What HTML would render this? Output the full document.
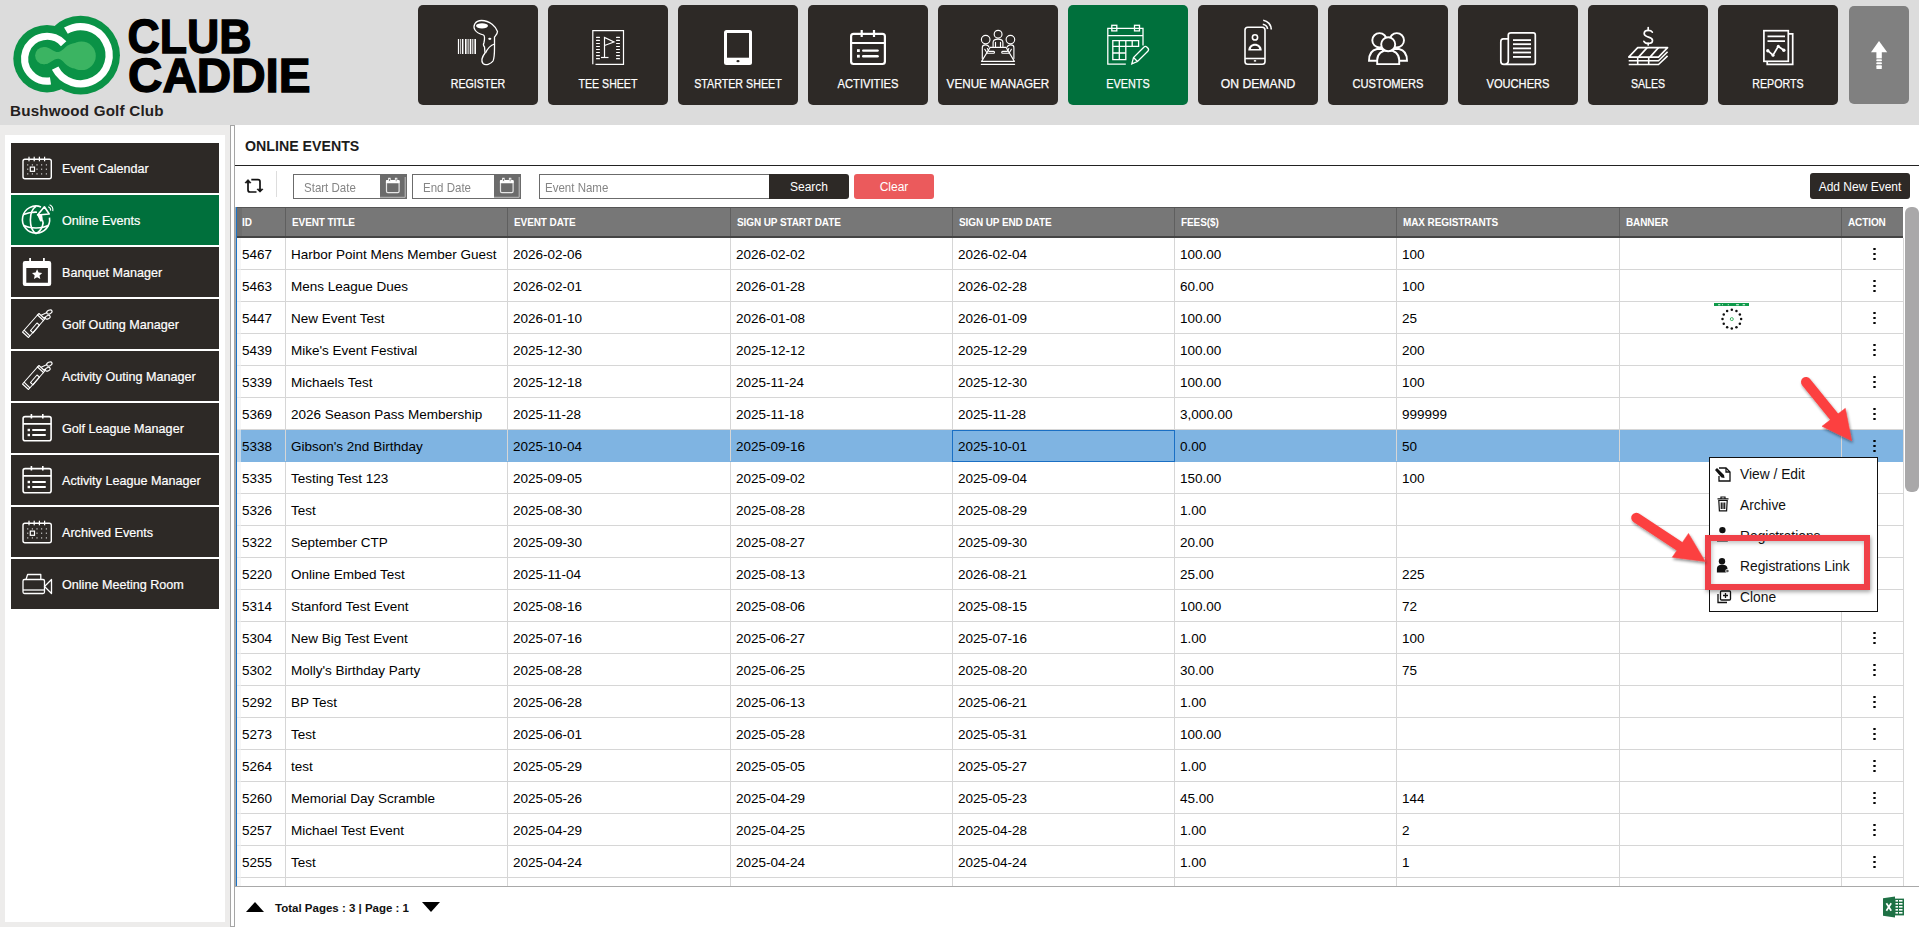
<!DOCTYPE html><html><head><meta charset="utf-8"><style>
*{box-sizing:border-box;margin:0;padding:0}
html,body{width:1919px;height:927px;overflow:hidden;background:#fff;font-family:"Liberation Sans",sans-serif;}
.abs{position:absolute}
.nav{position:absolute;top:5px;width:120px;height:100px;background:#2d2926;border-radius:5px;}
.nav span{position:absolute;left:0;right:0;top:75px;text-align:center;color:#fff;font-size:12px;letter-spacing:-0.3px;line-height:16px}
.si{position:absolute;left:11px;width:208px;height:50px;background:#2d2926;color:#fff;font-size:12.6px;line-height:52px;padding-left:51px;white-space:nowrap;-webkit-text-stroke:0.2px #fff}
.hd{position:absolute;top:207px;height:31px;background:#777;border-top:1px solid #555;border-bottom:2px solid #444;}
.th{position:absolute;top:0;height:28px;line-height:30px;color:#fff;font-weight:bold;font-size:10px;padding-left:6px;border-left:1px solid #5f5f5f;white-space:nowrap;letter-spacing:-0.1px}
.tr{position:absolute;left:237px;width:1666px;height:32px;border-bottom:1px solid #d6d6d6}
.td{position:absolute;top:0;height:31px;padding-top:2px;line-height:29px;font-size:13.5px;color:#000;padding-left:5px;border-left:1px solid #d6d6d6;white-space:nowrap}
.dots{position:absolute;left:1872.5px;width:3px}
.dots i{position:absolute;left:0;width:3px;height:2.2px;border-radius:50%;background:#000}
.mi{position:absolute;left:1740px;font-size:13.8px;color:#111;line-height:16px;white-space:nowrap}
</style></head><body><div class="abs" style="left:0;top:0;width:1919px;height:125px;background:#dcdcdc"></div><svg style="position:absolute;left:0;top:0" width="330" height="125" viewBox="0 0 330 125"><g fill="#0a9246"><circle cx="47" cy="58.7" r="33.7"/><circle cx="80.6" cy="55.2" r="39.35"/></g><g fill="none" stroke="#fff" stroke-width="7.3"><path d="M63.65,43.71 A22.4,22.4 0 1 0 50.5,80.82"/><path d="M65.9,30.73 A28.55,28.55 0 1 1 55.16,68.16"/></g><g fill="#3bb462"><circle cx="43.8" cy="55.6" r="8.7"/><circle cx="81.5" cy="55.8" r="14.3"/><path d="M43.8,46.9 C50,46.9 53,52 58.4,52 C63,52 66,43 76,43 L76,68.6 C66,68.6 63,58.8 58.4,58.8 C53,58.8 50,64.3 43.8,64.3 Z"/></g><text x="127.5" y="52.7" font-family="Liberation Sans" font-weight="bold" font-size="48" textLength="124" lengthAdjust="spacingAndGlyphs" fill="#000" stroke="#000" stroke-width="1.4">CLUB</text><text x="128" y="92.4" font-family="Liberation Sans" font-weight="bold" font-size="48" textLength="182.5" lengthAdjust="spacingAndGlyphs" fill="#000" stroke="#000" stroke-width="1.4">CADDIE</text></svg><div class="abs" style="left:10px;top:102px;font-size:15.2px;font-weight:bold;color:#24201d;line-height:18px;white-space:nowrap;letter-spacing:0.2px">Bushwood Golf Club</div><div class="nav" style="left:418px;background:#2d2926"></div><div class="nav" style="left:548px;background:#2d2926"></div><div class="nav" style="left:678px;background:#2d2926"></div><div class="nav" style="left:808px;background:#2d2926"></div><div class="nav" style="left:938px;background:#2d2926"></div><div class="nav" style="left:1068px;background:#00703c"></div><div class="nav" style="left:1198px;background:#2d2926"></div><div class="nav" style="left:1328px;background:#2d2926"></div><div class="nav" style="left:1458px;background:#2d2926"></div><div class="nav" style="left:1588px;background:#2d2926"></div><div class="nav" style="left:1718px;background:#2d2926"></div><div class="abs" style="left:1849px;top:6px;width:60px;height:98px;background:#808080;border-radius:5px"></div><svg class="abs" style="left:0;top:0;font-family:Liberation Sans" width="1919" height="125" viewBox="0 0 1919 125"><g fill="none" stroke="#fff" stroke-width="1.3"><path d="M481.5,20.5 C475,20.5 472.5,26 475,30 C476.5,32.5 480,34 483.5,35 C485,36 484.5,40 484,42.5 C483,44.5 483.5,46 484.5,47 L485,53 C482,57 481,61 483,63.5 C485.5,66 491,64 493,61 C494.5,58 494.5,52 494.5,48 L494.5,37 C495.5,35.5 497.5,34 497.5,31.5 C496,27 490,20.5 481.5,20.5 Z"/><path d="M485.5,53 C488,47.5 491.5,45 494.5,44"/></g><ellipse cx="482" cy="25.8" rx="6" ry="2.6" fill="#fff"/><ellipse cx="489.8" cy="38.8" rx="1.6" ry="1.1" fill="#fff"/><rect x="457.9" y="39" width="1.2" height="15" fill="#fff"/><rect x="460.2" y="39" width="0.7" height="15" fill="#fff"/><rect x="461.9" y="39" width="1.5" height="15" fill="#fff"/><rect x="465" y="39" width="1.6" height="15" fill="#fff"/><rect x="467.6" y="39" width="1.0" height="15" fill="#fff"/><rect x="469.7" y="39" width="1.6" height="15" fill="#fff"/><rect x="472.3" y="39" width="1.0" height="15" fill="#fff"/><rect x="474.4" y="39" width="1.6" height="15" fill="#fff"/><g fill="none" stroke="#fff" stroke-width="1.2"><path d="M595.5,64.3 H623.5 V30.7 H592.8 V64.3"/><path d="M604.5,57 V37.5 L614,42 L604.5,45.5"/><path d="M601,57.5 H608.5"/></g><rect x="596" y="36.8" width="4" height="1.1" rx="0.5" fill="#fff"/><rect x="616" y="36.8" width="4" height="1.1" rx="0.5" fill="#fff"/><rect x="596" y="39.8" width="4" height="1.1" rx="0.5" fill="#fff"/><rect x="616" y="39.8" width="4" height="1.1" rx="0.5" fill="#fff"/><rect x="596" y="42.9" width="4" height="1.1" rx="0.5" fill="#fff"/><rect x="616" y="42.9" width="4" height="1.1" rx="0.5" fill="#fff"/><rect x="596" y="45.9" width="4" height="1.1" rx="0.5" fill="#fff"/><rect x="616" y="45.9" width="4" height="1.1" rx="0.5" fill="#fff"/><rect x="596" y="49.0" width="4" height="1.1" rx="0.5" fill="#fff"/><rect x="616" y="49.0" width="4" height="1.1" rx="0.5" fill="#fff"/><rect x="596" y="52.0" width="4" height="1.1" rx="0.5" fill="#fff"/><rect x="616" y="52.0" width="4" height="1.1" rx="0.5" fill="#fff"/><rect x="596" y="55.1" width="4" height="1.1" rx="0.5" fill="#fff"/><rect x="616" y="55.1" width="4" height="1.1" rx="0.5" fill="#fff"/><rect x="596" y="58.1" width="4" height="1.1" rx="0.5" fill="#fff"/><rect x="616" y="58.1" width="4" height="1.1" rx="0.5" fill="#fff"/><rect x="724" y="30" width="28" height="35" rx="2.5" fill="#fff"/><rect x="727" y="33" width="22" height="24.7" fill="#2d2926"/><ellipse cx="738" cy="61.2" rx="1.6" ry="1.1" fill="#2d2926"/><g fill="none" stroke="#fff" stroke-width="2.2"><rect x="851.1" y="33.8" width="33.8" height="30.2" rx="2.5"/><path d="M851,43 H885"/><path d="M861.7,30 V37 M874,30 V37"/></g><g fill="#fff"><rect x="857" y="49.2" width="2.8" height="2.8"/><rect x="857" y="54.8" width="2.8" height="2.8"/><rect x="862" y="49.4" width="16.8" height="2.4" rx="1.2"/><rect x="862" y="55" width="16.8" height="2.4" rx="1.2"/></g><g fill="none" stroke="#fff" stroke-width="1.15" stroke-linejoin="round" stroke-linecap="round"><circle cx="998.1" cy="34.2" r="3.9"/><circle cx="985.7" cy="39.6" r="4.3"/><circle cx="1010.4" cy="39.6" r="4.3"/><path d="M993.1,46.6 V42.5 C993.1,40.2 995,39.1 998,39.1 C1001,39.1 1002.9,40.2 1002.9,42.5 V46.6"/><path d="M995.5,42.2 V46.6 M1000.5,42.2 V46.6"/><path d="M990.2,47.3 H1006 L1014.4,61.4 H981.6 Z"/><path d="M981.3,64.3 H1014.6"/><path d="M982.3,58.5 V47.5 C982.3,45.5 983.5,44.8 985.5,44.8 C987.5,44.8 988.5,45.5 989,47"/><path d="M984.8,49.3 L987.2,53.2 H993.6 C994.8,53.2 994.8,51.3 993.6,51.3 H988.8 L987.4,48.5"/><path d="M1013.9,58.5 V47.5 C1013.9,45.5 1012.7,44.8 1010.7,44.8 C1008.7,44.8 1007.7,45.5 1007.2,47"/><path d="M1011.4,49.3 L1009,53.2 H1002.6 C1001.4,53.2 1001.4,51.3 1002.6,51.3 H1007.4 L1008.8,48.5"/></g><g fill="none" stroke="#fff" stroke-width="1.3"><path d="M1125.8,64.2 H1107.8 V28.3 H1143 V45.5"/><path d="M1107.8,35.7 H1143"/><rect x="1111.8" y="25.3" width="5" height="5.6"/><rect x="1134.5" y="25.3" width="5" height="5.6"/><path d="M1112.8,40.6 H1138.6 V46.3 H1125.8 V59.7 H1112.8 Z"/><path d="M1119.3,40.6 V59.7 M1125.8,40.6 V46.3 M1132.2,40.6 V46.3 M1112.8,46.3 H1125.8 M1112.8,53 H1125.8"/><path d="M1131.8,63.8 L1133.5,57.5 L1143.8,47.2 C1144.8,46.2 1146,46.2 1147,47.2 L1147.8,48 C1148.8,49 1148.8,50.2 1147.8,51.2 L1137.5,61.5 Z M1133.5,57.5 L1137.5,61.5"/></g><g fill="none" stroke="#fff" stroke-width="1.6"><rect x="1245" y="27.3" width="20" height="37" rx="2.8"/><path d="M1245,58.5 H1265"/><circle cx="1255" cy="37.4" r="2.6"/><path d="M1263.2,20.2 A9.5,9.5 0 0 1 1271.3,29.6"/><path d="M1262.8,24.2 A5.8,5.8 0 0 1 1267.6,29"/></g><path d="M1248.3,50.6 C1248.3,41.5 1261.7,41.5 1261.7,50.6 Z" fill="#fff"/><path d="M1250.8,49 C1251.5,44.8 1258.5,44.8 1259.2,49 Z" fill="#2d2926"/><ellipse cx="1255" cy="60.9" rx="1.3" ry="0.8" fill="#fff"/><g fill="#2d2926" stroke="#fff" stroke-width="1.9"><path d="M1369,60.8 C1369,54 1372,50 1377,49 L1383,49 L1383,60.8 Z"/><path d="M1407,60.8 C1407,54 1404,50 1399,49 L1393,49 L1393,60.8 Z"/><circle cx="1379.5" cy="40.3" r="7.2"/><circle cx="1396.8" cy="40.3" r="7.2"/><path d="M1377.2,64.1 V60 C1377.2,54 1382,50 1388.2,50 C1394.4,50 1399.2,54 1399.2,60 V64.1 Z"/><circle cx="1388.2" cy="44.3" r="7"/></g><g fill="none" stroke="#fff" stroke-width="1.7"><path d="M1508.3,38.8 H1503.2 C1501.5,38.8 1500.8,40 1500.8,41.8 V61.2 C1500.8,63.3 1502,64.3 1504,64.3 C1506,64.3 1508.3,63.3 1508.3,61 V35 C1508.3,33.5 1509.3,32.8 1511,32.8 H1533.3 C1534.8,32.8 1535.3,33.5 1535.3,35 V62.5 C1535.3,63.8 1534.8,64.3 1533.3,64.3 H1504"/></g><rect x="1513" y="39.2" width="18" height="1.8" fill="#fff"/><rect x="1513" y="43.3" width="18" height="1.8" fill="#fff"/><rect x="1513" y="47.5" width="18" height="1.8" fill="#fff"/><rect x="1513" y="51.6" width="18" height="1.8" fill="#fff"/><rect x="1513" y="56.0" width="18" height="1.8" fill="#fff"/><g fill="none" stroke="#fff" stroke-width="1.7" stroke-linecap="round"><path d="M1652.3,32.2 C1651.5,30.8 1650,30.3 1648.2,30.3 C1645.5,30.3 1644.2,31.8 1644.2,33.6 C1644.2,38.2 1652.5,36.2 1652.5,40.4 C1652.5,42.3 1650.8,43.4 1648.2,43.4 C1646.2,43.4 1644.6,42.7 1643.9,41.3"/><path d="M1648.2,27.5 V30.3 M1648.2,43.4 V44.9"/></g><g fill="none" stroke="#fff" stroke-width="1.6" stroke-linejoin="round"><path d="M1628.7,57.1 L1637.7,47.6 H1667.6 L1658.5,57.1 Z"/><path d="M1638.5,57.1 L1647.2,47.6 M1650,57.1 L1658.5,47.6"/><path d="M1628.7,60.8 H1658.5 L1667.6,51.7 M1628.7,64.5 H1658.5 L1667.6,55.8"/><path d="M1637.7,57.1 V64.5 M1648.7,57.1 V64.5"/></g><g fill="none" stroke="#fff" stroke-width="1.7"><path d="M1789,33.8 H1792.7 V64.4 H1767.2 V61.3"/><rect x="1763.9" y="30.7" width="24.4" height="30.6"/><path d="M1767.5,36.3 H1785 M1767.5,41.2 H1785"/><path d="M1767.8,50.7 L1773,55.2 L1778.3,46.3 L1783.8,50.2"/></g><g fill="#fff"><circle cx="1767.8" cy="50.7" r="1.7"/><circle cx="1773" cy="55.2" r="1.5"/><circle cx="1778.3" cy="46.3" r="1.5"/><circle cx="1783.8" cy="50.2" r="1.7"/></g><g fill="#fff"><path d="M1879,41 L1887.2,52.3 H1871 Z"/><rect x="1876.4" y="52" width="5.4" height="6.4"/><rect x="1876.2" y="59.2" width="5.8" height="2" rx="1"/><rect x="1876.2" y="62.2" width="5.8" height="2" rx="1"/><rect x="1876.2" y="65.2" width="5.8" height="2" rx="1"/><rect x="1876.2" y="67" width="5.8" height="2" rx="1"/></g><text x="450.8" y="88" font-size="13.4" textLength="54.4" lengthAdjust="spacingAndGlyphs" fill="#fff" stroke="#fff" stroke-width="0.25">REGISTER</text><text x="578.6" y="88" font-size="13.4" textLength="58.8" lengthAdjust="spacingAndGlyphs" fill="#fff" stroke="#fff" stroke-width="0.25">TEE SHEET</text><text x="694.2" y="88" font-size="13.4" textLength="87.5" lengthAdjust="spacingAndGlyphs" fill="#fff" stroke="#fff" stroke-width="0.25">STARTER SHEET</text><text x="837.6" y="88" font-size="13.4" textLength="60.8" lengthAdjust="spacingAndGlyphs" fill="#fff" stroke="#fff" stroke-width="0.25">ACTIVITIES</text><text x="946.6" y="88" font-size="13.4" textLength="102.7" lengthAdjust="spacingAndGlyphs" fill="#fff" stroke="#fff" stroke-width="0.25">VENUE MANAGER</text><text x="1106.3" y="88" font-size="13.4" textLength="43.4" lengthAdjust="spacingAndGlyphs" fill="#fff" stroke="#fff" stroke-width="0.25">EVENTS</text><text x="1220.7" y="88" font-size="13.4" textLength="74.6" lengthAdjust="spacingAndGlyphs" fill="#fff" stroke="#fff" stroke-width="0.25">ON DEMAND</text><text x="1352.5" y="88" font-size="13.4" textLength="71" lengthAdjust="spacingAndGlyphs" fill="#fff" stroke="#fff" stroke-width="0.25">CUSTOMERS</text><text x="1486.5" y="88" font-size="13.4" textLength="63" lengthAdjust="spacingAndGlyphs" fill="#fff" stroke="#fff" stroke-width="0.25">VOUCHERS</text><text x="1630.9" y="88" font-size="13.4" textLength="34.2" lengthAdjust="spacingAndGlyphs" fill="#fff" stroke="#fff" stroke-width="0.25">SALES</text><text x="1752.3" y="88" font-size="13.4" textLength="51.3" lengthAdjust="spacingAndGlyphs" fill="#fff" stroke="#fff" stroke-width="0.25">REPORTS</text></svg><div class="abs" style="left:0;top:125px;width:230px;height:802px;background:#edeceb"></div><div class="abs" style="left:5px;top:135px;width:220px;height:787px;background:#fff"></div><div class="si" style="top:143px;background:#2d2926">Event Calendar</div><div class="si" style="top:195px;background:#00703c">Online Events</div><div class="si" style="top:247px;background:#2d2926">Banquet Manager</div><div class="si" style="top:299px;background:#2d2926">Golf Outing Manager</div><div class="si" style="top:351px;background:#2d2926">Activity Outing Manager</div><div class="si" style="top:403px;background:#2d2926">Golf League Manager</div><div class="si" style="top:455px;background:#2d2926">Activity League Manager</div><div class="si" style="top:507px;background:#2d2926">Archived Events</div><div class="si" style="top:559px;background:#2d2926">Online Meeting Room</div><svg class="abs" style="left:0;top:0" width="235" height="927" viewBox="0 0 235 927"><g fill="none" stroke="#fff" stroke-width="1.4"><rect x="23" y="159.2" width="28.3" height="19.6" rx="2"/></g><rect x="28.4" y="156.7" width="1.2" height="4.6" fill="#fff"/><rect x="33.6" y="156.7" width="1.2" height="4.6" fill="#fff"/><rect x="38.8" y="156.7" width="1.2" height="4.6" fill="#fff"/><rect x="44.0" y="156.7" width="1.2" height="4.6" fill="#fff"/><rect x="27.099999999999998" y="164.3" width="1.2" height="1.2" fill="#ccc"/><rect x="31.799999999999997" y="164.3" width="1.2" height="1.2" fill="#ccc"/><rect x="36.4" y="164.3" width="1.2" height="1.2" fill="#ccc"/><rect x="41.0" y="164.3" width="1.2" height="1.2" fill="#ccc"/><rect x="45.8" y="164.3" width="1.2" height="1.2" fill="#ccc"/><rect x="27.099999999999998" y="168.6" width="1.2" height="1.2" fill="#ccc"/><rect x="36.4" y="168.6" width="1.2" height="1.2" fill="#ccc"/><rect x="41.0" y="168.6" width="1.2" height="1.2" fill="#ccc"/><rect x="45.8" y="168.6" width="1.2" height="1.2" fill="#ccc"/><rect x="27.099999999999998" y="173.3" width="1.2" height="1.2" fill="#ccc"/><rect x="31.799999999999997" y="173.3" width="1.2" height="1.2" fill="#ccc"/><rect x="36.4" y="173.3" width="1.2" height="1.2" fill="#ccc"/><rect x="41.0" y="173.3" width="1.2" height="1.2" fill="#ccc"/><rect x="45.8" y="173.3" width="1.2" height="1.2" fill="#ccc"/><rect x="30.3" y="167.1" width="4.2" height="4.2" fill="none" stroke="#fff" stroke-width="1.2"/><g fill="none" stroke="#fff" stroke-width="1.6"><path d="M41,206.9 A13.6,13.6 0 1 0 49.5,217.6"/><path d="M36,206.4 C28.5,211 28.5,229 36,233.6 C43.5,229 43.5,222 42.5,220.5"/><path d="M23.5,214.6 C28,212.6 32.5,212 37,212.2"/><path d="M23.2,225.3 C30,228.8 42,228.8 48.8,225.3"/><path d="M44.4,206.8 L49.2,214 L37.6,215 Z" fill="#00703c" stroke-linejoin="round"/><path d="M48.2,206.8 A3.6,3.6 0 0 1 50.6,210.6 M49.6,204.8 A6,6 0 0 1 52.8,211.2" stroke-width="1.1"/></g><path d="M36.8,214 L42,214 L43,221.2 L40.2,221.4 Z" fill="#fff"/><path d="M25,261 H49 A2.2,2.2 0 0 1 51.2,263.2 V283.8 A2.2,2.2 0 0 1 49,286 H25 A2.2,2.2 0 0 1 22.8,283.8 V263.2 A2.2,2.2 0 0 1 25,261 Z M26.3,268 V282.7 H47.9 V268 Z" fill="#fff" fill-rule="evenodd"/><rect x="29.2" y="258" width="1.8" height="4" fill="#fff"/><rect x="43" y="258" width="1.8" height="4" fill="#fff"/><path d="M37.1,269.3 L38.6,272.6 L42.2,273 L39.5,275.4 L40.3,279 L37.1,277.2 L33.9,279 L34.7,275.4 L32,273 L35.6,272.6 Z" fill="#fff"/><g fill="none" stroke="#fff" stroke-width="1.1" stroke-linejoin="round"><path d="M22.5,332 L37.5,315 L43.5,320.5 L28.5,337.5 Z"/><path d="M24,330.2 L30,336 M37,315.5 L39,313.5 L44.8,319 L43,321"/><path d="M30.5,330.5 L37,323 L39.5,325.2 L33,332.8 Z"/><path d="M41.2,315.2 L47,312.6 M43.2,317.6 L45.6,317.3"/><ellipse cx="49.4" cy="312" rx="2.8" ry="1.8" transform="rotate(-25 49.4 312)"/><ellipse cx="47.8" cy="317.2" rx="2.5" ry="1.6" transform="rotate(-25 47.8 317.2)"/></g><g fill="none" stroke="#fff" stroke-width="1.1" stroke-linejoin="round"><path d="M22.5,384 L37.5,367 L43.5,372.5 L28.5,389.5 Z"/><path d="M24,382.2 L30,388 M37,367.5 L39,365.5 L44.8,371 L43,373"/><path d="M30.5,382.5 L37,375 L39.5,377.2 L33,384.8 Z"/><path d="M41.2,367.2 L47,364.6 M43.2,369.6 L45.6,369.3"/><ellipse cx="49.4" cy="364" rx="2.8" ry="1.8" transform="rotate(-25 49.4 364)"/><ellipse cx="47.8" cy="369.2" rx="2.5" ry="1.6" transform="rotate(-25 47.8 369.2)"/></g><g fill="none" stroke="#fff" stroke-width="1.6"><rect x="23.1" y="416.6" width="28" height="24.2" rx="2"/><path d="M23,423.9 H51.2 M31.4,414 V418.5 M42.8,414 V418.5"/></g><g fill="#fff"><rect x="27.6" y="428.8" width="2.4" height="2.4"/><rect x="27.6" y="433.8" width="2.4" height="2.4"/><rect x="32" y="429" width="14" height="2" rx="1"/><rect x="32" y="434" width="14" height="2" rx="1"/></g><g fill="none" stroke="#fff" stroke-width="1.6"><rect x="23.1" y="468.6" width="28" height="24.2" rx="2"/><path d="M23,475.9 H51.2 M31.4,466 V470.5 M42.8,466 V470.5"/></g><g fill="#fff"><rect x="27.6" y="480.8" width="2.4" height="2.4"/><rect x="27.6" y="485.8" width="2.4" height="2.4"/><rect x="32" y="481" width="14" height="2" rx="1"/><rect x="32" y="486" width="14" height="2" rx="1"/></g><g fill="none" stroke="#fff" stroke-width="1.4"><rect x="23" y="523.2" width="28.3" height="19.6" rx="2"/></g><rect x="28.4" y="520.7" width="1.2" height="4.6" fill="#fff"/><rect x="33.6" y="520.7" width="1.2" height="4.6" fill="#fff"/><rect x="38.8" y="520.7" width="1.2" height="4.6" fill="#fff"/><rect x="44.0" y="520.7" width="1.2" height="4.6" fill="#fff"/><rect x="27.099999999999998" y="528.3" width="1.2" height="1.2" fill="#ccc"/><rect x="31.799999999999997" y="528.3" width="1.2" height="1.2" fill="#ccc"/><rect x="36.4" y="528.3" width="1.2" height="1.2" fill="#ccc"/><rect x="41.0" y="528.3" width="1.2" height="1.2" fill="#ccc"/><rect x="45.8" y="528.3" width="1.2" height="1.2" fill="#ccc"/><rect x="27.099999999999998" y="532.6" width="1.2" height="1.2" fill="#ccc"/><rect x="36.4" y="532.6" width="1.2" height="1.2" fill="#ccc"/><rect x="41.0" y="532.6" width="1.2" height="1.2" fill="#ccc"/><rect x="45.8" y="532.6" width="1.2" height="1.2" fill="#ccc"/><rect x="27.099999999999998" y="537.3" width="1.2" height="1.2" fill="#ccc"/><rect x="31.799999999999997" y="537.3" width="1.2" height="1.2" fill="#ccc"/><rect x="36.4" y="537.3" width="1.2" height="1.2" fill="#ccc"/><rect x="41.0" y="537.3" width="1.2" height="1.2" fill="#ccc"/><rect x="45.8" y="537.3" width="1.2" height="1.2" fill="#ccc"/><rect x="30.3" y="531.1" width="4.2" height="4.2" fill="none" stroke="#fff" stroke-width="1.2"/><g fill="none" stroke="#fff" stroke-width="1.3" stroke-linejoin="round"><rect x="23" y="579.5" width="21.5" height="14" rx="1.5"/><path d="M23,590 H44.5"/><path d="M26,579.5 L27.6,574.5 H40.8 V579.5"/><path d="M44.5,586.5 L51.5,579.5 V593.5 Z"/></g></svg><div class="abs" style="left:230px;top:125px;width:5px;height:802px;border:1px solid #a5a5a5;background:#fff"></div><div class="abs" style="left:245px;top:137px;font-size:14.2px;font-weight:bold;color:#1c1c1c;line-height:18px;white-space:nowrap">ONLINE EVENTS</div><div class="abs" style="left:235px;top:164.5px;width:1684px;height:1px;background:#222"></div><svg class="abs" style="left:240px;top:172px" width="30" height="28" viewBox="240 172 30 28"><g fill="none" stroke="#111" stroke-width="1.7" stroke-linecap="butt"><path d="M248,182.5 V190 Q248,192 250,192 H256.5"/><path d="M251.3,179.7 H258 Q260,179.7 260,181.7 V189.5"/></g><path d="M245,182.8 L248,179.6 L251,182.8 Z M257,189.2 L260,192.2 L263,189.2 Z" fill="#111" stroke="#111" stroke-width="0.8" stroke-linejoin="round"/></svg><div class="abs" style="left:276px;top:171px;width:1px;height:26px;background:#ddd"></div><div class="abs" style="left:293px;top:174px;width:114px;height:25px;border:1.5px solid #6b6b6b;background:#fff"></div><div class="abs" style="left:304px;top:180px;font-size:12.8px;color:#858585;line-height:16px;white-space:nowrap;transform:scaleX(0.9);transform-origin:0 0">Start Date</div><div class="abs" style="left:380px;top:175px;width:26px;height:23px;background:#6b6b6b"></div><svg class="abs" style="left:380px;top:175px" width="27" height="24" viewBox="0 0 27 24"><rect x="6.5" y="5.6" width="12.6" height="12" rx="1.3" fill="none" stroke="#e6e6e6" stroke-width="1.2"/><rect x="5.9" y="5" width="13.8" height="3.3" rx="1" fill="#fff"/><rect x="8.6" y="3.2" width="1.6" height="3.6" fill="#6b6b6b" stroke="#fff" stroke-width="0.8"/><rect x="15.3" y="3.2" width="1.6" height="3.6" fill="#6b6b6b" stroke="#fff" stroke-width="0.8"/><path d="M25.2,2 V22.3 H0" fill="none" stroke="#c9c9c9" stroke-width="0.9"/></svg><div class="abs" style="left:412px;top:174px;width:109px;height:25px;border:1.5px solid #6b6b6b;background:#fff"></div><div class="abs" style="left:423px;top:180px;font-size:12.8px;color:#858585;line-height:16px;white-space:nowrap;transform:scaleX(0.9);transform-origin:0 0">End Date</div><div class="abs" style="left:494px;top:175px;width:26px;height:23px;background:#6b6b6b"></div><svg class="abs" style="left:494px;top:175px" width="27" height="24" viewBox="0 0 27 24"><rect x="6.5" y="5.6" width="12.6" height="12" rx="1.3" fill="none" stroke="#e6e6e6" stroke-width="1.2"/><rect x="5.9" y="5" width="13.8" height="3.3" rx="1" fill="#fff"/><rect x="8.6" y="3.2" width="1.6" height="3.6" fill="#6b6b6b" stroke="#fff" stroke-width="0.8"/><rect x="15.3" y="3.2" width="1.6" height="3.6" fill="#6b6b6b" stroke="#fff" stroke-width="0.8"/><path d="M25.2,2 V22.3 H0" fill="none" stroke="#c9c9c9" stroke-width="0.9"/></svg><div class="abs" style="left:539px;top:174px;width:231px;height:25px;border:1px solid #6b6b6b;background:#fff"></div><div class="abs" style="left:545px;top:179.5px;font-size:12.8px;color:#858585;line-height:16px;white-space:nowrap;transform:scaleX(0.9);transform-origin:0 0">Event Name</div><div class="abs" style="left:769px;top:174px;width:80px;height:25px;background:#2d2926;border-radius:0 3px 3px 0;color:#fff;font-size:12px;line-height:27px;text-align:center">Search</div><div class="abs" style="left:854px;top:174px;width:80px;height:25px;background:#eb5a5c;border-radius:3px;color:#fff;font-size:12px;line-height:27px;text-align:center">Clear</div><div class="abs" style="left:1810px;top:173px;width:100px;height:26px;background:#2d2926;border-radius:3px;color:#fff;font-size:12px;line-height:28px;text-align:center">Add New Event</div><div class="abs" style="left:235px;top:207px;width:1px;height:680px;background:#aaa"></div><div class="abs" style="left:236px;top:207px;width:1px;height:680px;background:#1a73c8"></div><div class="hd" style="left:237px;width:1666px"></div><div class="abs" style="left:237px;top:208px;width:5px;height:28px;background:#6f6f6f"></div><div class="th" style="left:237px;top:208px;width:48px;border-left:none;padding-left:5px;">ID</div><div class="th" style="left:285px;top:208px;width:222px;">EVENT TITLE</div><div class="th" style="left:507px;top:208px;width:223px;">EVENT DATE</div><div class="th" style="left:730px;top:208px;width:222px;">SIGN UP START DATE</div><div class="th" style="left:952px;top:208px;width:222px;">SIGN UP END DATE</div><div class="th" style="left:1174px;top:208px;width:222px;">FEES($)</div><div class="th" style="left:1396px;top:208px;width:223px;">MAX REGISTRANTS</div><div class="th" style="left:1619px;top:208px;width:222px;">BANNER</div><div class="th" style="left:1841px;top:208px;width:62px;">ACTION</div><div class="tr" style="top:238px;"><div class="td" style="left:0px;width:48px;border-left:none;">5467</div><div class="td" style="left:48px;width:222px;">Harbor Point Mens Member Guest</div><div class="td" style="left:270px;width:223px;">2026-02-06</div><div class="td" style="left:493px;width:222px;">2026-02-02</div><div class="td" style="left:715px;width:222px;">2026-02-04</div><div class="td" style="left:937px;width:222px;">100.00</div><div class="td" style="left:1159px;width:223px;">100</div><div class="td" style="left:1382px;width:222px;"></div><div class="td" style="left:1604px;width:62px;"></div></div><div class="dots" style="top:247.5px"><i style="top:0"></i><i style="top:5px"></i><i style="top:10px"></i></div><div class="tr" style="top:270px;"><div class="td" style="left:0px;width:48px;border-left:none;">5463</div><div class="td" style="left:48px;width:222px;">Mens League Dues</div><div class="td" style="left:270px;width:223px;">2026-02-01</div><div class="td" style="left:493px;width:222px;">2026-01-28</div><div class="td" style="left:715px;width:222px;">2026-02-28</div><div class="td" style="left:937px;width:222px;">60.00</div><div class="td" style="left:1159px;width:223px;">100</div><div class="td" style="left:1382px;width:222px;"></div><div class="td" style="left:1604px;width:62px;"></div></div><div class="dots" style="top:279.5px"><i style="top:0"></i><i style="top:5px"></i><i style="top:10px"></i></div><div class="tr" style="top:302px;"><div class="td" style="left:0px;width:48px;border-left:none;">5447</div><div class="td" style="left:48px;width:222px;">New Event Test</div><div class="td" style="left:270px;width:223px;">2026-01-10</div><div class="td" style="left:493px;width:222px;">2026-01-08</div><div class="td" style="left:715px;width:222px;">2026-01-09</div><div class="td" style="left:937px;width:222px;">100.00</div><div class="td" style="left:1159px;width:223px;">25</div><div class="td" style="left:1382px;width:222px;"></div><div class="td" style="left:1604px;width:62px;"></div></div><div class="dots" style="top:311.5px"><i style="top:0"></i><i style="top:5px"></i><i style="top:10px"></i></div><div class="tr" style="top:334px;"><div class="td" style="left:0px;width:48px;border-left:none;">5439</div><div class="td" style="left:48px;width:222px;">Mike's Event Festival</div><div class="td" style="left:270px;width:223px;">2025-12-30</div><div class="td" style="left:493px;width:222px;">2025-12-12</div><div class="td" style="left:715px;width:222px;">2025-12-29</div><div class="td" style="left:937px;width:222px;">100.00</div><div class="td" style="left:1159px;width:223px;">200</div><div class="td" style="left:1382px;width:222px;"></div><div class="td" style="left:1604px;width:62px;"></div></div><div class="dots" style="top:343.5px"><i style="top:0"></i><i style="top:5px"></i><i style="top:10px"></i></div><div class="tr" style="top:366px;"><div class="td" style="left:0px;width:48px;border-left:none;">5339</div><div class="td" style="left:48px;width:222px;">Michaels Test</div><div class="td" style="left:270px;width:223px;">2025-12-18</div><div class="td" style="left:493px;width:222px;">2025-11-24</div><div class="td" style="left:715px;width:222px;">2025-12-30</div><div class="td" style="left:937px;width:222px;">100.00</div><div class="td" style="left:1159px;width:223px;">100</div><div class="td" style="left:1382px;width:222px;"></div><div class="td" style="left:1604px;width:62px;"></div></div><div class="dots" style="top:375.5px"><i style="top:0"></i><i style="top:5px"></i><i style="top:10px"></i></div><div class="tr" style="top:398px;"><div class="td" style="left:0px;width:48px;border-left:none;">5369</div><div class="td" style="left:48px;width:222px;">2026 Season Pass Membership</div><div class="td" style="left:270px;width:223px;">2025-11-28</div><div class="td" style="left:493px;width:222px;">2025-11-18</div><div class="td" style="left:715px;width:222px;">2025-11-28</div><div class="td" style="left:937px;width:222px;">3,000.00</div><div class="td" style="left:1159px;width:223px;">999999</div><div class="td" style="left:1382px;width:222px;"></div><div class="td" style="left:1604px;width:62px;"></div></div><div class="dots" style="top:407.5px"><i style="top:0"></i><i style="top:5px"></i><i style="top:10px"></i></div><div class="tr" style="top:430px;background:#7fb4e2;border-bottom-color:#7fb4e2;"><div class="td" style="left:0px;width:48px;border-left:none;">5338</div><div class="td" style="left:48px;width:222px;">Gibson's 2nd Birthday</div><div class="td" style="left:270px;width:223px;">2025-10-04</div><div class="td" style="left:493px;width:222px;">2025-09-16</div><div class="td" style="left:715px;width:222px;">2025-10-01</div><div class="td" style="left:937px;width:222px;">0.00</div><div class="td" style="left:1159px;width:223px;">50</div><div class="td" style="left:1382px;width:222px;"></div><div class="td" style="left:1604px;width:62px;"></div></div><div class="dots" style="top:439.5px"><i style="top:0"></i><i style="top:5px"></i><i style="top:10px"></i></div><div class="tr" style="top:462px;"><div class="td" style="left:0px;width:48px;border-left:none;">5335</div><div class="td" style="left:48px;width:222px;">Testing Test 123</div><div class="td" style="left:270px;width:223px;">2025-09-05</div><div class="td" style="left:493px;width:222px;">2025-09-02</div><div class="td" style="left:715px;width:222px;">2025-09-04</div><div class="td" style="left:937px;width:222px;">150.00</div><div class="td" style="left:1159px;width:223px;">100</div><div class="td" style="left:1382px;width:222px;"></div><div class="td" style="left:1604px;width:62px;"></div></div><div class="dots" style="top:471.5px"><i style="top:0"></i><i style="top:5px"></i><i style="top:10px"></i></div><div class="tr" style="top:494px;"><div class="td" style="left:0px;width:48px;border-left:none;">5326</div><div class="td" style="left:48px;width:222px;">Test</div><div class="td" style="left:270px;width:223px;">2025-08-30</div><div class="td" style="left:493px;width:222px;">2025-08-28</div><div class="td" style="left:715px;width:222px;">2025-08-29</div><div class="td" style="left:937px;width:222px;">1.00</div><div class="td" style="left:1159px;width:223px;"></div><div class="td" style="left:1382px;width:222px;"></div><div class="td" style="left:1604px;width:62px;"></div></div><div class="dots" style="top:503.5px"><i style="top:0"></i><i style="top:5px"></i><i style="top:10px"></i></div><div class="tr" style="top:526px;"><div class="td" style="left:0px;width:48px;border-left:none;">5322</div><div class="td" style="left:48px;width:222px;">September CTP</div><div class="td" style="left:270px;width:223px;">2025-09-30</div><div class="td" style="left:493px;width:222px;">2025-08-27</div><div class="td" style="left:715px;width:222px;">2025-09-30</div><div class="td" style="left:937px;width:222px;">20.00</div><div class="td" style="left:1159px;width:223px;"></div><div class="td" style="left:1382px;width:222px;"></div><div class="td" style="left:1604px;width:62px;"></div></div><div class="dots" style="top:535.5px"><i style="top:0"></i><i style="top:5px"></i><i style="top:10px"></i></div><div class="tr" style="top:558px;"><div class="td" style="left:0px;width:48px;border-left:none;">5220</div><div class="td" style="left:48px;width:222px;">Online Embed Test</div><div class="td" style="left:270px;width:223px;">2025-11-04</div><div class="td" style="left:493px;width:222px;">2025-08-13</div><div class="td" style="left:715px;width:222px;">2026-08-21</div><div class="td" style="left:937px;width:222px;">25.00</div><div class="td" style="left:1159px;width:223px;">225</div><div class="td" style="left:1382px;width:222px;"></div><div class="td" style="left:1604px;width:62px;"></div></div><div class="dots" style="top:567.5px"><i style="top:0"></i><i style="top:5px"></i><i style="top:10px"></i></div><div class="tr" style="top:590px;"><div class="td" style="left:0px;width:48px;border-left:none;">5314</div><div class="td" style="left:48px;width:222px;">Stanford Test Event</div><div class="td" style="left:270px;width:223px;">2025-08-16</div><div class="td" style="left:493px;width:222px;">2025-08-06</div><div class="td" style="left:715px;width:222px;">2025-08-15</div><div class="td" style="left:937px;width:222px;">100.00</div><div class="td" style="left:1159px;width:223px;">72</div><div class="td" style="left:1382px;width:222px;"></div><div class="td" style="left:1604px;width:62px;"></div></div><div class="dots" style="top:599.5px"><i style="top:0"></i><i style="top:5px"></i><i style="top:10px"></i></div><div class="tr" style="top:622px;"><div class="td" style="left:0px;width:48px;border-left:none;">5304</div><div class="td" style="left:48px;width:222px;">New Big Test Event</div><div class="td" style="left:270px;width:223px;">2025-07-16</div><div class="td" style="left:493px;width:222px;">2025-06-27</div><div class="td" style="left:715px;width:222px;">2025-07-16</div><div class="td" style="left:937px;width:222px;">1.00</div><div class="td" style="left:1159px;width:223px;">100</div><div class="td" style="left:1382px;width:222px;"></div><div class="td" style="left:1604px;width:62px;"></div></div><div class="dots" style="top:631.5px"><i style="top:0"></i><i style="top:5px"></i><i style="top:10px"></i></div><div class="tr" style="top:654px;"><div class="td" style="left:0px;width:48px;border-left:none;">5302</div><div class="td" style="left:48px;width:222px;">Molly's Birthday Party</div><div class="td" style="left:270px;width:223px;">2025-08-28</div><div class="td" style="left:493px;width:222px;">2025-06-25</div><div class="td" style="left:715px;width:222px;">2025-08-20</div><div class="td" style="left:937px;width:222px;">30.00</div><div class="td" style="left:1159px;width:223px;">75</div><div class="td" style="left:1382px;width:222px;"></div><div class="td" style="left:1604px;width:62px;"></div></div><div class="dots" style="top:663.5px"><i style="top:0"></i><i style="top:5px"></i><i style="top:10px"></i></div><div class="tr" style="top:686px;"><div class="td" style="left:0px;width:48px;border-left:none;">5292</div><div class="td" style="left:48px;width:222px;">BP Test</div><div class="td" style="left:270px;width:223px;">2025-06-28</div><div class="td" style="left:493px;width:222px;">2025-06-13</div><div class="td" style="left:715px;width:222px;">2025-06-21</div><div class="td" style="left:937px;width:222px;">1.00</div><div class="td" style="left:1159px;width:223px;"></div><div class="td" style="left:1382px;width:222px;"></div><div class="td" style="left:1604px;width:62px;"></div></div><div class="dots" style="top:695.5px"><i style="top:0"></i><i style="top:5px"></i><i style="top:10px"></i></div><div class="tr" style="top:718px;"><div class="td" style="left:0px;width:48px;border-left:none;">5273</div><div class="td" style="left:48px;width:222px;">Test</div><div class="td" style="left:270px;width:223px;">2025-06-01</div><div class="td" style="left:493px;width:222px;">2025-05-28</div><div class="td" style="left:715px;width:222px;">2025-05-31</div><div class="td" style="left:937px;width:222px;">100.00</div><div class="td" style="left:1159px;width:223px;"></div><div class="td" style="left:1382px;width:222px;"></div><div class="td" style="left:1604px;width:62px;"></div></div><div class="dots" style="top:727.5px"><i style="top:0"></i><i style="top:5px"></i><i style="top:10px"></i></div><div class="tr" style="top:750px;"><div class="td" style="left:0px;width:48px;border-left:none;">5264</div><div class="td" style="left:48px;width:222px;">test</div><div class="td" style="left:270px;width:223px;">2025-05-29</div><div class="td" style="left:493px;width:222px;">2025-05-05</div><div class="td" style="left:715px;width:222px;">2025-05-27</div><div class="td" style="left:937px;width:222px;">1.00</div><div class="td" style="left:1159px;width:223px;"></div><div class="td" style="left:1382px;width:222px;"></div><div class="td" style="left:1604px;width:62px;"></div></div><div class="dots" style="top:759.5px"><i style="top:0"></i><i style="top:5px"></i><i style="top:10px"></i></div><div class="tr" style="top:782px;"><div class="td" style="left:0px;width:48px;border-left:none;">5260</div><div class="td" style="left:48px;width:222px;">Memorial Day Scramble</div><div class="td" style="left:270px;width:223px;">2025-05-26</div><div class="td" style="left:493px;width:222px;">2025-04-29</div><div class="td" style="left:715px;width:222px;">2025-05-23</div><div class="td" style="left:937px;width:222px;">45.00</div><div class="td" style="left:1159px;width:223px;">144</div><div class="td" style="left:1382px;width:222px;"></div><div class="td" style="left:1604px;width:62px;"></div></div><div class="dots" style="top:791.5px"><i style="top:0"></i><i style="top:5px"></i><i style="top:10px"></i></div><div class="tr" style="top:814px;"><div class="td" style="left:0px;width:48px;border-left:none;">5257</div><div class="td" style="left:48px;width:222px;">Michael Test Event</div><div class="td" style="left:270px;width:223px;">2025-04-29</div><div class="td" style="left:493px;width:222px;">2025-04-25</div><div class="td" style="left:715px;width:222px;">2025-04-28</div><div class="td" style="left:937px;width:222px;">1.00</div><div class="td" style="left:1159px;width:223px;">2</div><div class="td" style="left:1382px;width:222px;"></div><div class="td" style="left:1604px;width:62px;"></div></div><div class="dots" style="top:823.5px"><i style="top:0"></i><i style="top:5px"></i><i style="top:10px"></i></div><div class="tr" style="top:846px;"><div class="td" style="left:0px;width:48px;border-left:none;">5255</div><div class="td" style="left:48px;width:222px;">Test</div><div class="td" style="left:270px;width:223px;">2025-04-24</div><div class="td" style="left:493px;width:222px;">2025-04-24</div><div class="td" style="left:715px;width:222px;">2025-04-24</div><div class="td" style="left:937px;width:222px;">1.00</div><div class="td" style="left:1159px;width:223px;">1</div><div class="td" style="left:1382px;width:222px;"></div><div class="td" style="left:1604px;width:62px;"></div></div><div class="dots" style="top:855.5px"><i style="top:0"></i><i style="top:5px"></i><i style="top:10px"></i></div><div class="tr" style="top:878px;"><div class="td" style="left:0px;width:48px;border-left:none;"></div><div class="td" style="left:48px;width:222px;"></div><div class="td" style="left:270px;width:223px;"></div><div class="td" style="left:493px;width:222px;"></div><div class="td" style="left:715px;width:222px;"></div><div class="td" style="left:937px;width:222px;"></div><div class="td" style="left:1159px;width:223px;"></div><div class="td" style="left:1382px;width:222px;"></div><div class="td" style="left:1604px;width:62px;"></div></div><div class="abs" style="left:1903px;top:238px;width:1px;height:648px;background:#d6d6d6"></div><div class="abs" style="left:237px;top:238px;width:4px;height:648px;background:#f0f0f0;opacity:0.6"></div><div class="abs" style="left:952px;top:430px;width:223px;height:32px;border:1.2px solid #1a6fc4"></div><div class="abs" style="left:1904px;top:207px;width:15px;height:680px;background:#fff"></div><div class="abs" style="left:1905px;top:207px;width:14px;height:284.5px;background:#a9a8a9;border-radius:6px 6px 6px 6px"></div><div class="abs" style="left:235px;top:886px;width:1684px;height:41px;background:#fff;border-top:1.6px solid #a9a9a9"></div><svg class="abs" style="left:245px;top:901px" width="20" height="12"><path d="M1,11 L10,1 L19,11 Z" fill="#000"/></svg><div class="abs" style="left:275px;top:901px;font-size:11.5px;font-weight:bold;color:#111;line-height:15px;white-space:nowrap">Total Pages : 3 | Page : 1</div><svg class="abs" style="left:421px;top:901px" width="20" height="12"><path d="M1,1 L10,11 L19,1 Z" fill="#000"/></svg><svg class="abs" style="left:1883px;top:896px" width="22" height="22" viewBox="0 0 22 22"><rect x="11" y="2.6" width="10" height="16.8" fill="#1e7145"/><g fill="#fff"><rect x="12.5" y="4.0" width="2.5" height="1.6"/><rect x="16" y="4.0" width="3.5" height="1.6"/><rect x="12.5" y="7.0" width="2.5" height="1.6"/><rect x="16" y="7.0" width="3.5" height="1.6"/><rect x="12.5" y="10.0" width="2.5" height="1.6"/><rect x="16" y="10.0" width="3.5" height="1.6"/><rect x="12.5" y="13.0" width="2.5" height="1.6"/><rect x="16" y="13.0" width="3.5" height="1.6"/><rect x="12.5" y="16.0" width="2.5" height="1.6"/><rect x="16" y="16.0" width="3.5" height="1.6"/></g><path d="M0,2.3 L12,0.4 V21.6 L0,19.7 Z" fill="#1e7145"/><path d="M3.4,7.2 L8.2,14.8 M8.2,7.2 L3.4,14.8" stroke="#fff" stroke-width="1.7"/></svg><div class="abs" style="left:1714px;top:303px;width:35px;height:3px;background:#0f9a4a"></div><svg class="abs" style="left:1714px;top:303px" width="36" height="4"><g fill="#fff"><rect x="4" y="1.2" width="2.5" height="1" rx="0.5"/><rect x="8" y="1.2" width="0.8" height="1"/><rect x="13.8" y="1.2" width="0.9" height="1"/><rect x="22" y="1.2" width="3" height="1" rx="0.5"/><rect x="28.5" y="1.2" width="2.6" height="1" rx="0.5"/></g></svg><svg class="abs" style="left:1720px;top:307px" width="24" height="24" viewBox="0 0 24 24"><circle cx="21.10" cy="12.10" r="1.25" fill="#111"/><circle cx="19.85" cy="16.75" r="1.25" fill="#111"/><circle cx="16.45" cy="20.15" r="1.25" fill="#111"/><circle cx="11.80" cy="21.40" r="1.25" fill="#111"/><circle cx="7.15" cy="20.15" r="1.25" fill="#111"/><circle cx="3.75" cy="16.75" r="1.25" fill="#111"/><circle cx="2.50" cy="12.10" r="1.25" fill="#111"/><circle cx="3.75" cy="7.45" r="1.25" fill="#111"/><circle cx="7.15" cy="4.05" r="1.25" fill="#111"/><circle cx="11.80" cy="2.80" r="1.25" fill="#111"/><circle cx="16.45" cy="4.05" r="1.25" fill="#111"/><circle cx="19.85" cy="7.45" r="1.25" fill="#111"/><circle cx="11.8" cy="12.1" r="1.5" fill="none" stroke="#3bb462" stroke-width="1"/></svg><div class="abs" style="left:1709px;top:457px;width:169px;height:155px;background:#fff;border:1px solid #111"></div><div class="mi" style="top:467px">View / Edit</div><div class="mi" style="top:498px">Archive</div><div class="mi" style="top:529px">Registrations</div><div class="mi" style="top:559px">Registrations Link</div><div class="mi" style="top:590px">Clone</div><svg class="abs" style="left:1700px;top:460px" width="40" height="150" viewBox="1700 460 40 150"><g fill="none" stroke="#111" stroke-width="1.3"><path d="M1719,468 H1726 L1730,472 V481 H1719 V476"/><path d="M1726,468 V472 H1730"/></g><path d="M1715,470 L1717,468 L1724,475 L1724.5,478 L1721.5,477.5 Z" fill="#111"/><g fill="none" stroke="#111" stroke-width="1.2"><path d="M1717.5,498.8 H1728.5 M1721,498.5 V497 H1725 V498.5"/><path d="M1718.8,500.5 H1727.2 L1726.6,510.8 H1719.4 Z"/><path d="M1721.3,502.5 V509 M1723,502.5 V509 M1724.7,502.5 V509"/></g><circle cx="1722.4" cy="530.1" r="3.2" fill="#111"/><path d="M1717,541.5 V539 C1717,536.5 1719,535 1722.4,535 C1725.8,535 1727.8,536.5 1727.8,539 V541.5 Z" fill="#111"/><circle cx="1722" cy="561.3" r="3.2" fill="#111"/><path d="M1716.9,572.5 V569 C1716.9,566 1719,564.8 1722.2,564.8 C1725.4,564.8 1727.5,566 1727.5,569 V572.5 Z" fill="#111"/><circle cx="1727.4" cy="571" r="2.1" fill="#fff"/><circle cx="1727.4" cy="571" r="1.3" fill="#555"/><g fill="none" stroke="#111" stroke-width="1.3"><rect x="1720.5" y="591" width="10" height="9" rx="1"/><path d="M1718,594 V602.5 H1727"/><path d="M1725.5,593 V598 M1723,595.5 H1728"/></g></svg><div class="abs" style="left:1705px;top:535px;width:165px;height:55px;border:6px solid #f04048;box-shadow:1px 2px 4px rgba(0,0,0,0.35), inset 1px 2px 4px rgba(0,0,0,0.25)"></div><div class="abs" style="left:1711px;top:541px;width:153px;height:43px;background:transparent"></div><svg class="abs" style="left:1600px;top:350px" width="319" height="250" viewBox="1600 350 319 250"><defs><filter id="sh" x="-20%" y="-20%" width="150%" height="150%"><feGaussianBlur in="SourceAlpha" stdDeviation="1.6"/><feOffset dx="1" dy="2"/><feComponentTransfer><feFuncA type="linear" slope="0.45"/></feComponentTransfer><feMerge><feMergeNode/><feMergeNode in="SourceGraphic"/></feMerge></filter></defs><g filter="url(#sh)" fill="#fc4141" stroke="#fc4141"><path d="M1806,382 L1836,419" stroke-width="10" stroke-linecap="round"/><path d="M1822,426.3 L1845.3,408.3 L1851.7,440.7 Z" stroke-width="0.5"/><path d="M1636.2,517.8 L1679,546" stroke-width="10" stroke-linecap="round"/><path d="M1672.3,557.2 L1688.5,533.4 L1705.2,561.5 Z" stroke-width="0.5"/></g></svg></body></html>
